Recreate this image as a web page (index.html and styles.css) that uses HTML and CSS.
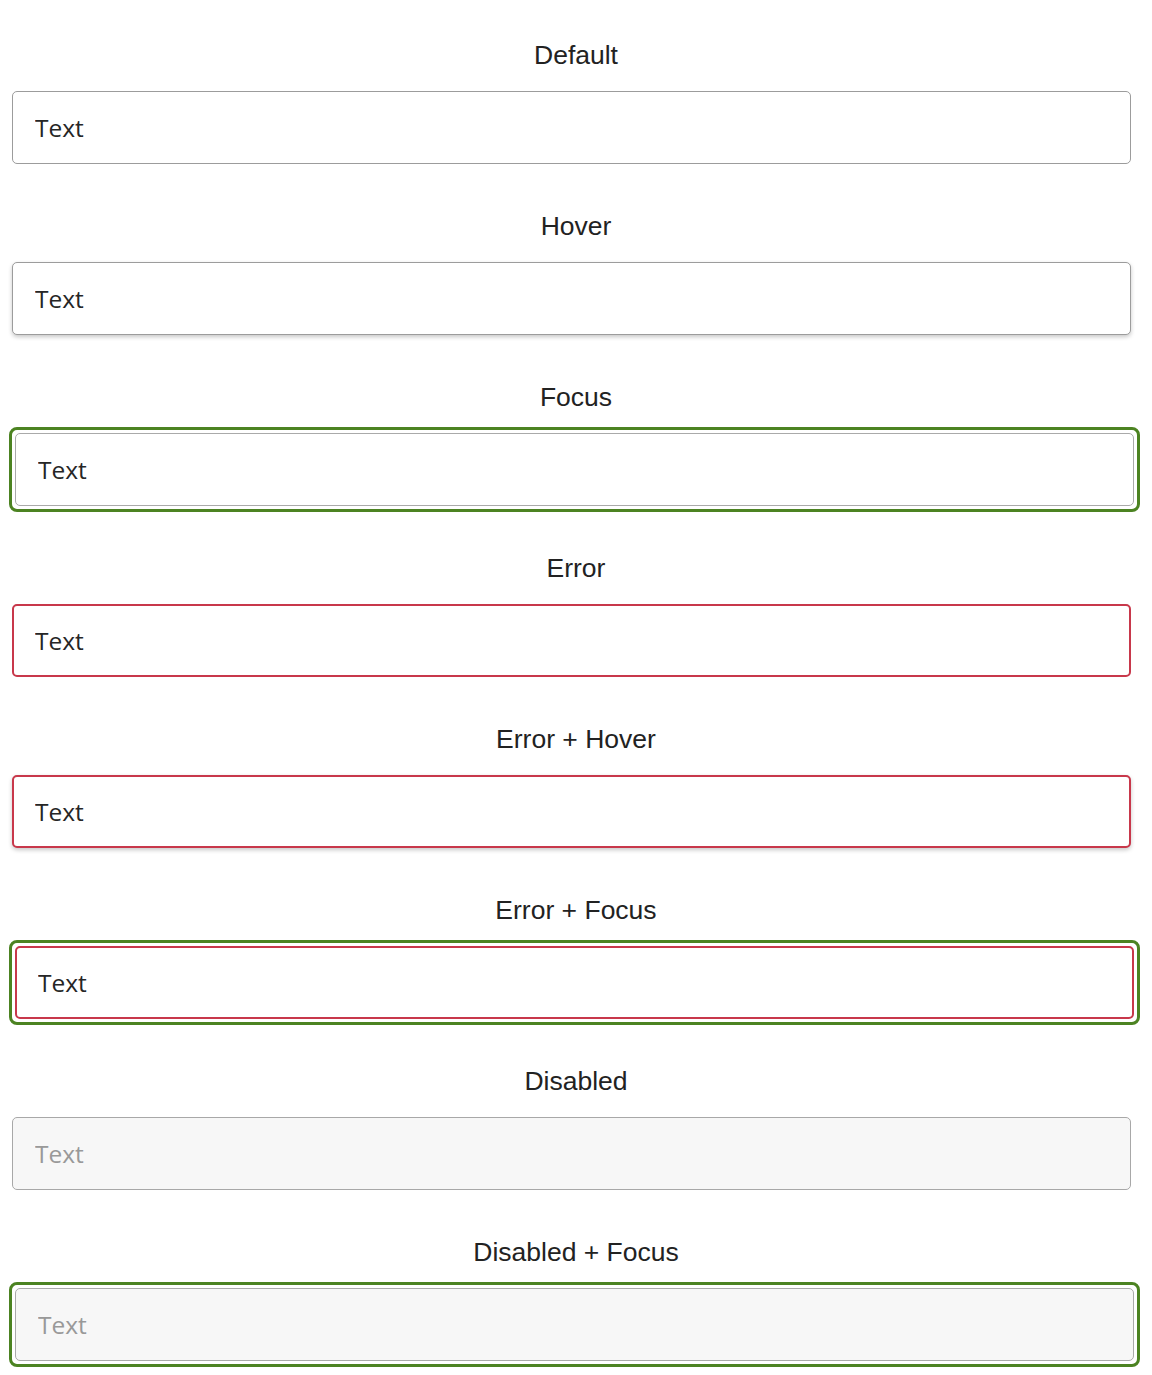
FILE: index.html
```html
<!DOCTYPE html>
<html lang="en">
<head>
<meta charset="utf-8">
<title>Text input states</title>
<link rel="stylesheet" href="styles.css">
</head>
<body>
<main class="states">
  <section class="state">
    <h2 class="state-label">Default</h2>
    <input class="field" type="text" value="Text">
  </section>
  <section class="state">
    <h2 class="state-label">Hover</h2>
    <input class="field is-hover" type="text" value="Text">
  </section>
  <section class="state">
    <h2 class="state-label">Focus</h2>
    <div class="focus-ring"><input class="field" type="text" value="Text"></div>
  </section>
  <section class="state">
    <h2 class="state-label">Error</h2>
    <input class="field is-error" type="text" value="Text">
  </section>
  <section class="state">
    <h2 class="state-label">Error + Hover</h2>
    <input class="field is-error is-hover" type="text" value="Text">
  </section>
  <section class="state">
    <h2 class="state-label">Error + Focus</h2>
    <div class="focus-ring"><input class="field is-error" type="text" value="Text"></div>
  </section>
  <section class="state">
    <h2 class="state-label">Disabled</h2>
    <input class="field" type="text" value="Text" disabled>
  </section>
  <section class="state">
    <h2 class="state-label">Disabled + Focus</h2>
    <div class="focus-ring"><input class="field" type="text" value="Text" disabled></div>
  </section>
</main>
</body>
</html>
```

FILE: styles.css
```css
html, body {
  margin: 0;
  padding: 0;
  background: #ffffff;
}

.states {
  display: flex;
  flex-direction: column;
  gap: 46px;
  padding: 39px 21px 8px 12px;
}

.state {
  display: flex;
  flex-direction: column;
}

.state-label {
  margin: 0 -21px 20px -12px;
  font-family: "Liberation Sans", Arial, sans-serif;
  font-weight: 400;
  font-size: 26.5px;
  line-height: 32px;
  color: #222222;
  text-align: center;
}

.field {
  box-sizing: border-box;
  display: block;
  width: 100%;
  height: 73px;
  margin: 0;
  padding: 0 22px;
  border: 1px solid #9c9c9c;
  border-radius: 5px;
  background: #ffffff;
  font-family: "Open Sans", "Noto Sans", sans-serif;
  font-size: 24.5px;
  color: #262626;
  outline: none;
}

.field.is-hover {
  box-shadow: 0 2px 4px rgba(0, 0, 0, 0.22);
}

.field.is-error {
  border: 2px solid #c8384b;
  padding-left: 21px;
}

.field:disabled {
  background: #f7f7f7;
  color: #999999;
  border-color: #a8a8a8;
}

.focus-ring {
  margin: -6px -9px -6px -3px;
  padding: 3px;
  border: 3px solid #4c8322;
  border-radius: 8px;
  background: #ffffff;
}

.focus-ring .field {
  border-color: #aaaaaa;
}

.focus-ring .field.is-error {
  border-color: #c8384b;
}
```
